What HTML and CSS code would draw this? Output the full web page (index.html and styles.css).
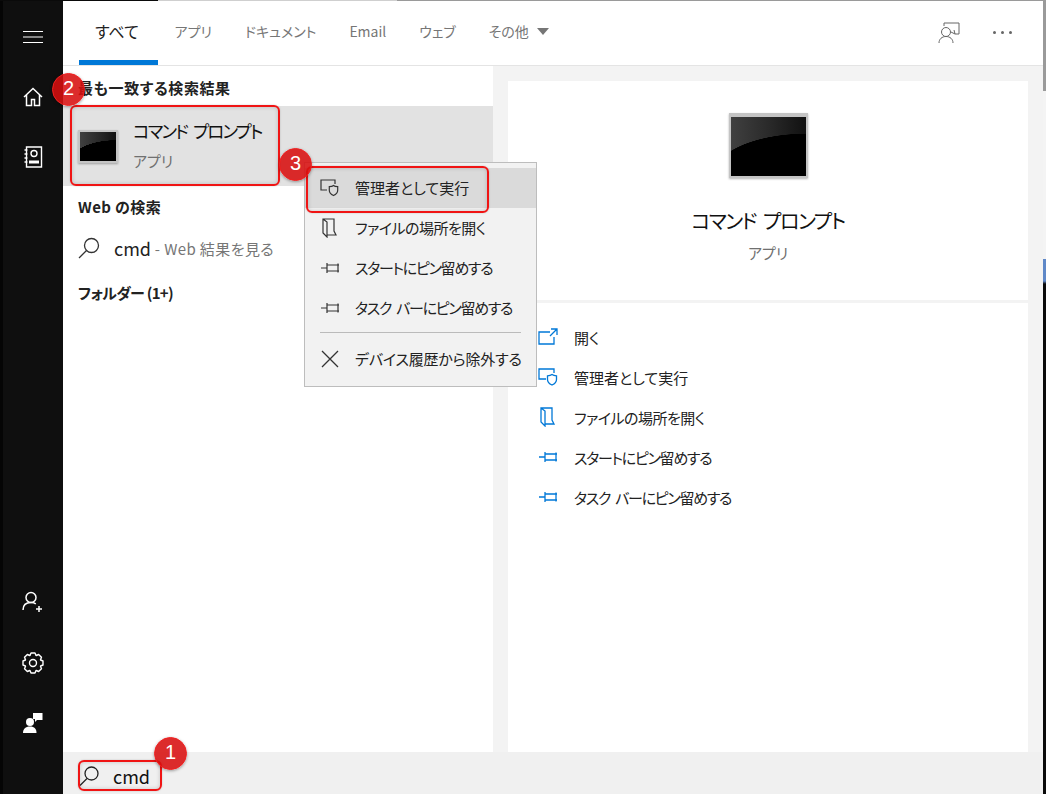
FILE: index.html
```html
<!DOCTYPE html>
<html lang="ja">
<head>
  <meta charset="UTF-8">
  <meta name="viewport" content="width=device-width, initial-scale=1.0">
  <title>Windows Search</title>
  <link rel="stylesheet" href="styles.css">
</head>
<body>
  <div class="topline"></div>
  <div class="window">
    <!-- Left rail -->
    <nav class="rail">
      <div class="rail-top">
        <svg class="menu-icon" width="22" height="14" viewBox="0 0 22 14"><path d="M1 1.500h20M1 7h20M1 12.500h20" fill="none" stroke="#fff"/></svg>
        <svg class="home-icon" width="20" height="20" viewBox="0 0 20 20"><path d="M1 10 10 1.500 19 10M3.500 8v10.500h5v-6h3v6h5V8" fill="none" stroke="#fff" stroke-width="1.500"/></svg>
        <svg class="book-icon" width="20" height="22" viewBox="0 0 20 22"><path d="M3.500 1h15v20h-15zM1.500 4h3M1.500 8h3M1.500 12h3M1.500 16h3" fill="none" stroke="#fff" stroke-width="1.400"/><circle cx="11" cy="7.500" r="3" fill="none" stroke="#fff" stroke-width="1.400"/><path d="M6 14.500h10v3H6z" fill="#fff"/></svg>
      </div>
      <div class="rail-bottom">
        <svg width="22" height="22" viewBox="0 0 22 22"><circle cx="9" cy="6.500" r="5" fill="none" stroke="#fff" stroke-width="1.500"/><path d="M1 19c0-5 3-7.500 8-7.500 2 0 3.500.4 4.800 1.300" fill="none" stroke="#fff" stroke-width="1.500"/><path d="M17 15v6M14 18h6" stroke="#fff" stroke-width="1.500"/></svg>
        <svg width="22" height="22" viewBox="-11 -11 22 22"><path d="M-3-7.600-2-10H2L3-7.600 3.250-7.490 5.660-8.490 8.490-5.660 7.490-3.250 7.600-3 10-2V2L7.600 3 7.490 3.250 8.490 5.660 5.660 8.490 3.250 7.490 3 7.600 2 10H-2L-3 7.600-3.250 7.490-5.660 8.490-8.490 5.660-7.490 3.250-7.600 3-10 2V-2L-7.600-3-7.490-3.250-8.490-5.660-5.660-8.490-3.250-7.490z" fill="none" stroke="#fff" stroke-width="1.400" stroke-linejoin="round"/><circle r="3.500" fill="none" stroke="#fff" stroke-width="1.400"/></svg>
        <svg width="20" height="20" viewBox="0 0 20 20"><circle cx="7" cy="9" r="4" fill="#fff"/><path d="M0 20c0-4 2.500-6.500 7-6.500s6.500 2.500 6.500 6.500z" fill="#fff"/><path d="M10 0h9.500v7H14l-2 2V6h-2z" fill="#fff"/></svg>
      </div>
    </nav>

    <div class="main">
      <!-- Tabs -->
      <header class="tabs">
        <a class="tab tab-active">すべて</a>
        <a class="tab">アプリ</a>
        <a class="tab">ドキュメント</a>
        <a class="tab">Email</a>
        <a class="tab">ウェブ</a>
        <a class="tab">その他 <span class="caret"></span></a>
        <div class="tabs-right">
          <svg width="22" height="22" viewBox="0 0 22 22"><path d="M6 1h15v11h-4M6 1v3" fill="none" stroke="#666"/><path d="M13 10l4 2-1-4" fill="none" stroke="#666"/><circle cx="8" cy="10" r="4.500" fill="none" stroke="#666"/><path d="M1 21c0-4 3-6.500 7-6.500s7 2.500 7 6.500" fill="none" stroke="#666"/></svg>
          <span class="dots"><i></i><i></i><i></i></span>
        </div>
      </header>

      <div class="content">
        <!-- Results -->
        <section class="results">
          <h2 class="group-title group-first">最も一致する検索結果</h2>
          <div class="best-match">
            <div class="cmd-icon cmd-small"></div>
            <div>
              <div class="best-title">コマンド プロンプト</div>
              <div class="best-sub">アプリ</div>
            </div>
          </div>
          <h2 class="group-title group-web">Web の検索</h2>
          <div class="web-row">
            <svg width="22" height="22" viewBox="0 0 22 22"><circle cx="13.500" cy="8.500" r="7" fill="none" stroke="#333" stroke-width="1.300"/><path d="M8.500 13.500 1 21" stroke="#333" stroke-width="1.300"/></svg>
            <span class="web-cmd">cmd</span><span class="web-hint"> - Web 結果を見る</span>
          </div>
          <h2 class="group-title group-folder">フォルダー (1+)</h2>
        </section>

        <!-- Preview -->
        <section class="preview">
          <div class="preview-card">
            <div class="preview-head">
              <div class="cmd-icon cmd-large"></div>
              <div class="preview-title">コマンド プロンプト</div>
              <div class="preview-sub">アプリ</div>
            </div>
            <ul class="actions">
              <li>
                <svg width="20" height="18" viewBox="0 0 20 18"><path d="M12 4H1v12h15V9M13 1h6v6M19 1l-7 7" fill="none" stroke="#0078d7" stroke-width="1.300"/></svg>
                開く
              </li>
              <li>
                <svg width="20" height="18" viewBox="0 0 20 18"><path d="M8 11H1V1h15v4" fill="none" stroke="#0078d7" stroke-width="1.300"/><path d="M14 6.500c1.200 1 2.500 1.300 4.500 1.300v3.700c0 2.500-1.800 4.300-4.500 5.500-2.700-1.200-4.500-3-4.500-5.500V7.800c2 0 3.300-.3 4.500-1.300z" fill="#fff" stroke="#0078d7" stroke-width="1.300"/></svg>
                管理者として実行
              </li>
              <li class="tight-file">
                <svg width="20" height="20" viewBox="0 0 20 20"><path d="M3 1v14l4 4v-2h9l-2-4V1zM3 1l4 3v13" fill="none" stroke="#0078d7" stroke-width="1.300"/></svg>
                ファイルの場所を開く
              </li>
              <li class="tight-pin">
                <svg width="20" height="14" viewBox="0 0 20 14"><path d="M1 7h6M7 2v10M7 4h12M7 10h12M18 2.500v9" fill="none" stroke="#0078d7" stroke-width="1.300"/></svg>
                スタートにピン留めする
              </li>
              <li class="tight-pin">
                <svg width="20" height="14" viewBox="0 0 20 14"><path d="M1 7h6M7 2v10M7 4h12M7 10h12M18 2.500v9" fill="none" stroke="#0078d7" stroke-width="1.300"/></svg>
                タスク バーにピン留めする
              </li>
            </ul>
          </div>
        </section>
      </div>

      <!-- Search box -->
      <footer class="searchbar">
        <svg width="20" height="20" viewBox="0 0 20 20"><circle cx="12.500" cy="7.500" r="6.500" fill="none" stroke="#222" stroke-width="1.300"/><path d="M8 12.500 1 19.500" stroke="#222" stroke-width="1.300"/></svg>
        <span class="search-text">cmd</span>
      </footer>
    </div>

    <div class="edge"></div>
  </div>

  <!-- Context menu -->
  <div class="menu">
    <div class="menu-item menu-item-hover">
      <svg width="20" height="18" viewBox="0 0 20 18"><path d="M7 11H1V1h14v4" fill="none" stroke="#333" stroke-width="1.200"/><path d="M13.500 6.500c1 .9 2.300 1.200 4.200 1.200v3.600c0 2.400-1.700 4.100-4.200 5.200-2.500-1.100-4.200-2.800-4.200-5.200V7.700c1.900 0 3.200-.3 4.200-1.200z" fill="none" stroke="#333" stroke-width="1.200"/></svg>
      管理者として実行
    </div>
    <div class="menu-item tight-file">
      <svg width="20" height="20" viewBox="0 0 20 20"><path d="M3 1v14l4 4v-2h9l-2-4V1zM3 1l4 3v13" fill="none" stroke="#333" stroke-width="1.200"/></svg>
      ファイルの場所を開く
    </div>
    <div class="menu-item tight-pin">
      <svg width="20" height="14" viewBox="0 0 20 14"><path d="M1 7h6M7 2v10M7 4h12M7 10h12M18 2.500v9" fill="none" stroke="#333" stroke-width="1.200"/></svg>
      スタートにピン留めする
    </div>
    <div class="menu-item tight-pin">
      <svg width="20" height="14" viewBox="0 0 20 14"><path d="M1 7h6M7 2v10M7 4h12M7 10h12M18 2.500v9" fill="none" stroke="#333" stroke-width="1.200"/></svg>
      タスク バーにピン留めする
    </div>
    <div class="menu-sep"></div>
    <div class="menu-item tight-device">
      <svg width="20" height="18" viewBox="0 0 20 18"><path d="M2 1l16 16M18 1 2 17" fill="none" stroke="#333" stroke-width="1.300"/></svg>
      デバイス履歴から除外する
    </div>
  </div>

  <!-- Annotations drawn on top of the screenshot -->
  <div class="mark mark-best"></div>
  <div class="mark mark-admin"></div>
  <div class="mark mark-search"></div>
  <div class="badge badge-1">1</div>
  <div class="badge badge-2">2</div>
  <div class="badge badge-3">3</div>
</body>
</html>
```

FILE: styles.css
```css
* {
  box-sizing: border-box;
}

html, body {
  margin: 0;
  padding: 0;
  height: 100%;
  overflow: hidden;
}

body {
  position: relative;
  width: 1046px;
  height: 794px;
  font-family: "Noto Sans CJK JP", "Noto Sans", sans-serif;
  font-feature-settings: "palt";
  color: #222;
  background-color: #fff;
}

.topline {
  height: 1px;
  background: linear-gradient(90deg, #0a0a0a 68px, #0a0a0a 158px, #cfcfcf 158px, #cfcfcf 397px, #9a9a9a 397px);
}

.window {
  display: flex;
  height: 793px;
}

/* Left rail */
.rail {
  width: 63px;
  flex-shrink: 0;
  background-color: #0f0f0f;
  border-left: 3px solid #050505;
  display: flex;
  flex-direction: column;
  justify-content: space-between;
  align-items: center;
}

.rail-top,
.rail-bottom {
  display: flex;
  flex-direction: column;
  align-items: center;
}

.rail-top {
  padding-top: 29px;
}

.home-icon {
  margin-top: 43px;
}

.book-icon {
  margin-top: 39px;
}

.rail-bottom {
  padding-bottom: 61px;
  gap: 39px;
}

/* Main */
.main {
  width: 980px;
  flex-shrink: 0;
  display: flex;
  flex-direction: column;
}

.tabs {
  height: 65px;
  padding-left: 16px;
  display: flex;
  align-items: flex-start;
  border-bottom: 1px solid #e4e4e4;
}

.tab {
  height: 64px;
  padding: 19px 16.500px 0;
  font-size: 14px;
  line-height: 22px;
  color: #767676;
  white-space: nowrap;
}

.tab-active {
  width: 79px;
  padding: 19px 16px 0;
  color: #222;
  font-size: 16px;
  border-bottom: 5px solid #0078d7;
}

.caret {
  display: inline-block;
  margin-left: 5px;
  vertical-align: 2px;
  border-left: 6.500px solid transparent;
  border-right: 6.500px solid transparent;
  border-top: 7px solid #767676;
}

.tabs-right {
  margin-left: auto;
  padding: 21px 31px 0 0;
  display: flex;
  gap: 33px;
}

.dots {
  display: flex;
  gap: 5px;
  padding-top: 9px;
}

.dots i {
  width: 3px;
  height: 3px;
  border-radius: 50%;
  background-color: #666;
}

.content {
  flex: 1;
  display: flex;
  min-height: 0;
}

/* Results list */
.results {
  width: 430px;
  flex-shrink: 0;
}

.group-title {
  margin: 0;
  padding-left: 15px;
  font-size: 15px;
  line-height: 20px;
  font-weight: 700;
  letter-spacing: 0.4px;
  color: #222;
}

.group-first {
  padding-top: 12px;
  height: 40px;
  letter-spacing: 0.6px;
}

.best-match {
  height: 80px;
  padding-left: 15px;
  display: flex;
  align-items: center;
  gap: 15px;
  background-color: #e2e2e2;
}

.best-title {
  margin-top: -4px;
  font-size: 17.500px;
  line-height: 26px;
  letter-spacing: -1.900px;
  word-spacing: 4px;
  color: #111;
}

.best-sub {
  margin-top: 7px;
  font-size: 15px;
  line-height: 20px;
  color: #707070;
}

.group-web {
  margin-top: 11px;
}

.web-row {
  height: 46px;
  margin-top: 8px;
  padding-left: 15px;
  display: flex;
  align-items: center;
  font-size: 15px;
  color: #767676;
  white-space: pre;
}

.web-cmd {
  margin-left: 14px;
  font-size: 18px;
  color: #222;
}

.web-hint {
  letter-spacing: 0.4px;
}

.group-folder {
  margin-top: 12px;
  letter-spacing: -0.700px;
}

.cmd-icon {
  flex-shrink: 0;
  border: 2px solid #c4c4c4;
  box-shadow: 0 1px 2px rgba(0, 0, 0, 0.3);
  background-color: #000;
  background-image:
    radial-gradient(ellipse 125% 72% at 100% 100%, #000 99%, transparent 100%),
    linear-gradient(90deg, #404040, #2a2a2a 50%, #111);
}

.cmd-small {
  width: 40px;
  height: 33px;
}

.cmd-large {
  width: 79px;
  height: 65px;
  margin-bottom: 29px;
  border-top-width: 4px;
}

/* Preview pane */
.preview {
  flex: 1;
  padding: 15px 15px 0;
  background-color: #f3f3f3;
}

.preview-card {
  height: 671px;
  background-color: #fff;
}

.preview-head {
  height: 222px;
  padding-top: 32px;
  display: flex;
  flex-direction: column;
  align-items: center;
  border-bottom: 3px solid #f3f3f3;
}

.preview-title {
  font-size: 20px;
  line-height: 28px;
  letter-spacing: -1.450px;
  word-spacing: 4px;
  color: #111;
}

.preview-sub {
  margin-top: 8px;
  font-size: 15px;
  line-height: 20px;
  color: #707070;
}

.actions {
  list-style: none;
  margin: 0;
  padding: 14px 0 0 30px;
}

.actions li {
  height: 40px;
  display: flex;
  align-items: center;
  font-size: 15px;
  color: #222;
}

.actions svg {
  width: 20px;
  margin-right: 16px;
}

/* Kana is narrower in the original UI font */
.tight-file {
  letter-spacing: -0.500px;
}

.tight-pin {
  letter-spacing: -1.300px;
  word-spacing: 3px;
}

.tight-device {
  letter-spacing: -0.200px;
}

/* Bottom search box */
.searchbar {
  height: 42px;
  flex-shrink: 0;
  padding: 5px 0 0 16px;
  display: flex;
  align-items: center;
  gap: 14px;
  background-color: #f0f0f0;
}

.search-text {
  font-size: 18px;
  color: #111;
}

.edge {
  flex: 1;
  background: linear-gradient(180deg, #9a9a9a 90px, #f4f4f4 90px, #f4f4f4 258px, #5f88c8 258px, #5f88c8 280px, #0a0a0a 283px);
}

/* Context menu */
.menu {
  position: absolute;
  left: 304px;
  top: 162px;
  width: 233px;
  height: 225px;
  padding-top: 5px;
  background-color: #f2f2f2;
  border: 1px solid #bdbdbd;
}

.menu-item {
  height: 40px;
  padding: 0 0 1px 15px;
  display: flex;
  align-items: center;
  gap: 15px;
  font-size: 15px;
  color: #222;
  white-space: nowrap;
}

.menu-item-hover {
  background-color: #dadada;
}

.menu-sep {
  height: 1px;
  margin: 4px 15px 6px;
  background-color: #bbb;
}

/* Annotations */
.mark {
  position: absolute;
  border: 2px solid #f01414;
  border-radius: 6px;
  box-shadow: inset 0 0 4px rgba(0, 0, 0, 0.18), 0 0 2px rgba(0, 0, 0, 0.2);
}

.mark-best {
  left: 70px;
  top: 105px;
  width: 210px;
  height: 81px;
}

.mark-admin {
  left: 306px;
  top: 166px;
  width: 183px;
  height: 47px;
}

.mark-search {
  left: 78px;
  top: 760px;
  width: 84px;
  height: 31px;
}

.badge {
  position: absolute;
  width: 33px;
  height: 33px;
  border-radius: 50%;
  background-color: rgba(215, 15, 15, 0.88);
  border: 1px solid #f02020;
  box-shadow: 0 1px 3px rgba(0, 0, 0, 0.35);
  color: #fff;
  font-family: "Liberation Sans", sans-serif;
  font-size: 20px;
  line-height: 29px;
  text-align: center;
}

.badge-1 {
  left: 154px;
  top: 737px;
}

.badge-2 {
  left: 52px;
  top: 73px;
}

.badge-3 {
  left: 279px;
  top: 148px;
}
```
